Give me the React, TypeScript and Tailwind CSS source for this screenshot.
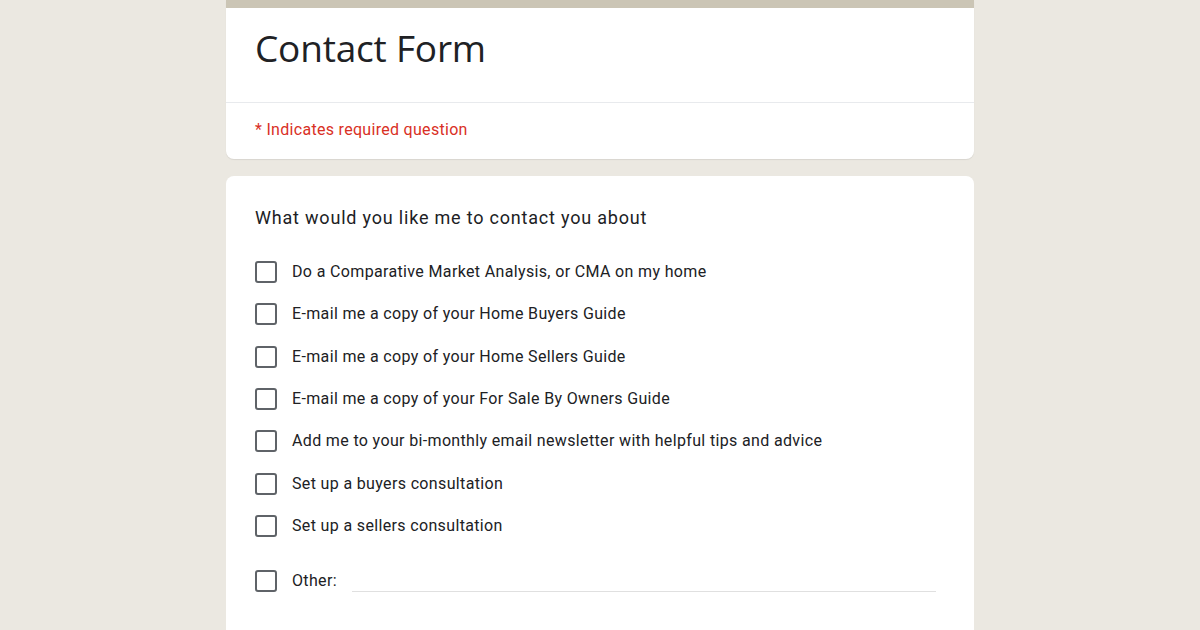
import React from "react";

const options = [
  "Do a Comparative Market Analysis, or CMA on my home",
  "E-mail me a copy of your Home Buyers Guide",
  "E-mail me a copy of your Home Sellers Guide",
  "E-mail me a copy of your For Sale By Owners Guide",
  "Add me to your bi-monthly email newsletter with helpful tips and advice",
  "Set up a buyers consultation",
  "Set up a sellers consultation",
];

function Box() {
  return <div className="w-[22px] h-[22px] shrink-0 rounded-[3px] border-2 border-[#5f6368]" />;
}

export default function App() {
  return (
    <div className="w-[1200px] h-[630px] overflow-hidden bg-[#ebe8e1] flex flex-col items-center" style={{ fontFamily: "Roboto, 'Liberation Sans', sans-serif" }}>
      <div className="w-[748px] bg-white rounded-b-lg border-t-[8px] border-[#cbc5b5] shadow-[0_1px_1px_rgba(0,0,0,0.08)]">
        <div className="h-[95px] px-[29px] pt-[16px] border-b border-[#e8eaed]">
          <div className="text-[37px] leading-[48px] text-[#202124] tracking-[-0.2px]" style={{ fontFamily: "'Open Sans', Roboto, sans-serif" }}>Contact Form</div>
        </div>
        <div className="h-[56px] px-[29px] pt-[16px] text-[16px] leading-[22px] text-[#d93025] tracking-[0.3px]">* Indicates required question</div>
      </div>
      <div className="w-[748px] mt-[17px] bg-white rounded-lg px-[29px] pt-[30px] pb-[40px]">
        <div className="text-[18px] text-[#202124] tracking-[0.8px] leading-[24px]">What would you like me to contact you about</div>
        <div className="mt-[21px] flex flex-col">
          {options.map((o) => (
            <div key={o} className="h-[42.33px] flex items-center gap-[15px]">
              <Box />
              <span className="text-[16px] text-[#202124] tracking-[0.35px]">{o}</span>
            </div>
          ))}
          <div className="h-[42px] mt-[13px] flex items-center gap-[15px]">
            <Box />
            <span className="text-[16px] text-[#202124] tracking-[0.35px]">Other:</span>
            <div className="flex-1 self-end mb-[10px] mr-[9px] border-b border-[#e0e0e0]" />
          </div>
        </div>
      </div>
    </div>
  );
}
